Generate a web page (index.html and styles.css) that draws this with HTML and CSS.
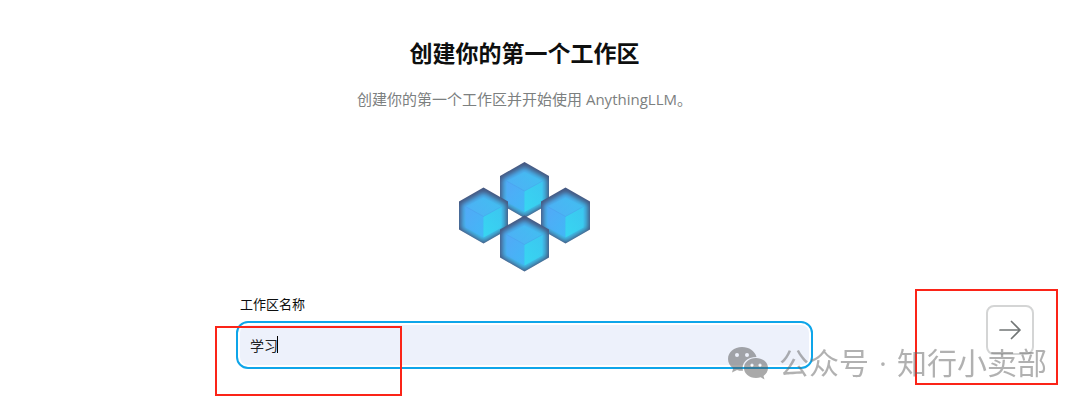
FILE: index.html
```html
<!DOCTYPE html>
<html lang="zh-CN">
<head>
<meta charset="utf-8">
<meta name="viewport" content="width=device-width, initial-scale=1">
<title>创建你的第一个工作区</title>
<link rel="stylesheet" href="styles.css">
</head>
<body>
<main class="page">
  <header class="intro">
    <h1 class="title">创建你的第一个工作区</h1>
    <p class="subtitle">创建你的第一个工作区并开始使用 AnythingLLM。</p>
  </header>
  <svg class="logo" viewBox="0 0 132 110" width="132" height="110" aria-hidden="true">
    <defs>
      <linearGradient id="face" x1="0" y1="0" x2="1" y2="1">
        <stop offset="0" stop-color="#50a9f5"/>
        <stop offset="1" stop-color="#36cbed"/>
      </linearGradient>
      <linearGradient id="top" x1="0" y1="1" x2="1" y2="0">
        <stop offset="0" stop-color="#53acf8"/>
        <stop offset="1" stop-color="#3fc3f0"/>
      </linearGradient>
      <linearGradient id="left" x1="0" y1="0" x2="1" y2="1">
        <stop offset="0" stop-color="#55a6f8"/>
        <stop offset="1" stop-color="#43b4fa"/>
      </linearGradient>
      <linearGradient id="right" x1="0" y1="1" x2="1" y2="0">
        <stop offset="0" stop-color="#35dcf2"/>
        <stop offset="1" stop-color="#3bc8f0"/>
      </linearGradient>
      <filter id="soft" x="-20%" y="-20%" width="140%" height="140%">
        <feGaussianBlur stdDeviation="2.4"/>
      </filter>
      <clipPath id="hex"><path d="M0-28 24.5-14V14L0 28-24.5 14V-14Z"/></clipPath>
      <g id="cube">
        <path d="M0-28 24.5-14V14L0 28-24.5 14V-14Z" fill="#46577f"/>
        <g clip-path="url(#hex)">
          <path d="M0-23 22-11V13L0 26-22 13V-11Z" fill="url(#face)" filter="url(#soft)"/>
        </g>
        <path d="M0-18 18-9 0 1-18-9Z" fill="url(#top)" opacity=".6"/>
        <path d="M-18-9 0 1V22L-18 12Z" fill="url(#left)" opacity=".7"/>
        <path d="M18-9 0 1V22L18 12Z" fill="url(#right)" opacity=".8"/>
        <path d="M-18-9 0 1 18-9" fill="none" stroke="#4b98ea" stroke-width=".7" opacity=".6"/>
      </g>
    </defs>
    <use href="#cube" x="65.500" y="28"/>
    <use href="#cube" x="24.500" y="53.500"/>
    <use href="#cube" x="106.500" y="53.500"/>
    <use href="#cube" x="65.500" y="81.500"/>
  </svg>
  <form class="form">
    <div class="field">
      <label class="label" for="workspace">工作区名称</label>
      <div class="control">
        <input class="input" id="workspace" type="text" value="学习" autocomplete="off">
        <span class="caret"></span>
        <span class="mark mark-field"></span>
      </div>
    </div>
    <div class="action">
      <button class="next" type="button" aria-label="下一步">
        <svg width="24" height="24" viewBox="0 0 24 24" fill="none" stroke="#727676" stroke-width="1.7" stroke-linecap="round" stroke-linejoin="round" aria-hidden="true"><path d="M2 12H22M13.500 3.500 22 12 13.500 20.500"/></svg>
      </button>
      <span class="mark mark-next"></span>
    </div>
  </form>
  <div class="watermark">
    <svg width="42" height="34" viewBox="0 0 42 34" aria-hidden="true">
      <path fill="#555" fill-rule="evenodd" d="M15 1C7 1 1 6.200 1 13c0 4 2 7.200 5.200 9.300L5 26.500 10 24c2 .7 4 .9 6 .8C14 17 20 11 29.500 11 28 5 22 1 15 1ZM10 7a2 2 0 1 1 0 4 2 2 0 0 1 0-4Zm10 0a2 2 0 1 1 0 4 2 2 0 0 1 0-4Z"/>
      <path fill="#555" fill-rule="evenodd" d="M29 12c-7 0-12 4.500-12 10s5 10 12 10c1.700 0 3.200-.3 4.700-.7L37.500 33.500 36.500 30C39.300 28 41 25.300 41 22c0-5.500-5-10-12-10ZM25 17.500a1.600 1.600 0 1 1 0 3.200 1.600 1.600 0 0 1 0-3.200Zm8 0a1.600 1.600 0 1 1 0 3.200 1.600 1.600 0 0 1 0-3.200Z"/>
    </svg>
    <span>公众号</span>
    <span>·</span>
    <span>知行小卖部</span>
  </div>
</main>
</body>
</html>
```
FILE: styles.css
```css
* {
  box-sizing: border-box;
}

body {
  margin: 0;
  background: #fff;
  color: #0e0f0f;
  font-family: "Open Sans", "Noto Sans CJK SC", sans-serif;
}

.page {
  position: relative;
  display: flex;
  flex-direction: column;
  align-items: center;
  padding: 35px 46px 38px 15px;
}

.intro {
  text-align: center;
}

.title {
  margin: 0;
  font-size: 23px;
  line-height: 36px;
  font-weight: 700;
}

.subtitle {
  margin: 16px 0 0;
  color: #7c8080;
  font-size: 15px;
  line-height: 24px;
}

.logo {
  margin-top: 51px;
}

.form {
  display: grid;
  grid-template-columns: 1fr minmax(0, 569px) 1fr;
  align-self: stretch;
  margin-top: 22px;
}

.field {
  grid-column: 2;
}

.label {
  display: block;
  margin-bottom: 11px;
  font-size: 13px;
  line-height: 20px;
}

.control {
  position: relative;
}

.input {
  display: block;
  width: 100%;
  height: 40px;
  padding: 0 10px;
  border: 0;
  border-radius: 8px;
  outline: 2px solid #0ea5e9;
  outline-offset: 2px;
  background: #edf1fb;
  color: #202326;
  font-family: inherit;
  font-size: 14px;
}

.caret {
  position: absolute;
  top: 11px;
  left: 37px;
  width: 1px;
  height: 17px;
  background: #000;
}

.action {
  position: relative;
  justify-self: end;
  align-self: end;
  margin-bottom: 10px;
}

.next {
  display: flex;
  align-items: center;
  justify-content: center;
  width: 48px;
  height: 50px;
  padding: 0;
  border: 2px solid #d4d5d5;
  border-radius: 8px;
  background: #fff;
}

.mark {
  position: absolute;
  border: 2px solid #fb2418;
  pointer-events: none;
}

.mark-field {
  top: 1px;
  left: -25px;
  width: 187px;
  height: 70px;
}

.mark-next {
  top: -16px;
  right: -24px;
  width: 143px;
  height: 96px;
}

.watermark {
  position: absolute;
  right: 33px;
  bottom: 18px;
  display: flex;
  align-items: center;
  gap: 10px;
  color: #666;
  font-size: 30px;
  line-height: 44px;
  opacity: 0.5;
  pointer-events: none;
}
```
